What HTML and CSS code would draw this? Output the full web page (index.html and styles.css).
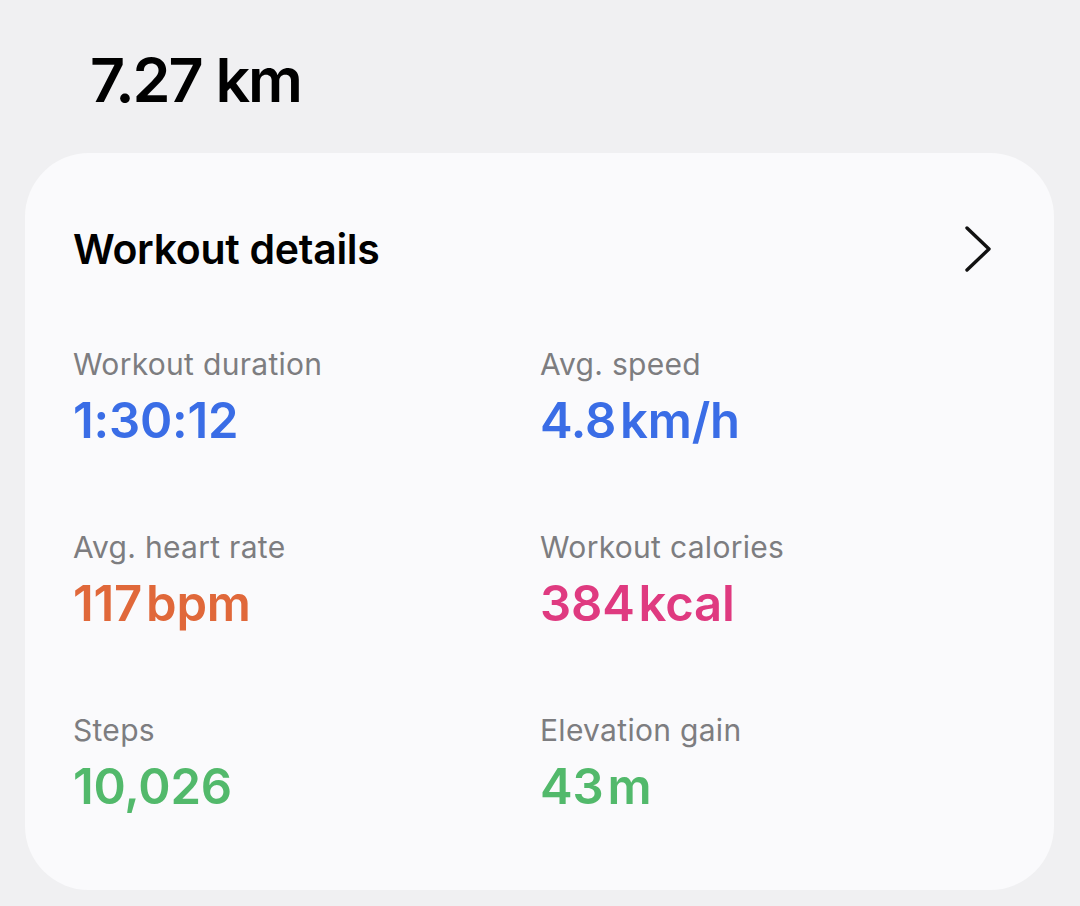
FILE: index.html
```html
<!DOCTYPE html>
<html lang="en">
<head>
<meta charset="utf-8">
<link rel="stylesheet" href="styles.css">
<title>Workout</title>
</head>
<body>
<div class="distance">7.27 km</div>
<section class="card">
  <div class="card-head">
    <h2 class="card-title">Workout details</h2>
    <svg class="chevron" width="28" height="48" viewBox="0 0 28 48" aria-hidden="true">
      <polyline points="3,3 25,24 3,45" fill="none" stroke="#111" stroke-width="3.4" stroke-linecap="round" stroke-linejoin="round"/>
    </svg>
  </div>
  <div class="stats">
    <div class="stat">
      <div class="label">Workout duration</div>
      <div class="value blue">1:30:12</div>
    </div>
    <div class="stat">
      <div class="label">Avg. speed</div>
      <div class="value blue">4.8<span class="unit">km/h</span></div>
    </div>
    <div class="stat">
      <div class="label">Avg. heart rate</div>
      <div class="value orange">117<span class="unit">bpm</span></div>
    </div>
    <div class="stat">
      <div class="label">Workout calories</div>
      <div class="value pink">384<span class="unit">kcal</span></div>
    </div>
    <div class="stat">
      <div class="label">Steps</div>
      <div class="value green">10,026</div>
    </div>
    <div class="stat">
      <div class="label">Elevation gain</div>
      <div class="value green">43<span class="unit">m</span></div>
    </div>
  </div>
</section>
</body>
</html>
```
FILE: styles.css
```css
* { box-sizing: border-box; }
html, body {
  margin: 0;
  padding: 0;
  background: #f0f0f2;
  font-family: Inter, "Noto Sans", "Liberation Sans", sans-serif;
  color: #000;
}
.distance {
  padding: 49px 0 0 90px;
  height: 153px;
  font-size: 61px;
  line-height: 62px;
  font-weight: 600;
  letter-spacing: -2.2px;
  word-spacing: 1px;
}
.card {
  margin: 0 26px 0 25px;
  height: 737px;
  background: #fafafc;
  border-radius: 64px;
  padding: 72px 62px 0 48px;
}
.card-head {
  display: flex;
  align-items: center;
  justify-content: space-between;
  height: 48px;
}
.card-title {
  margin: 0;
  font-size: 41px;
  line-height: 48px;
  font-weight: 600;
  letter-spacing: -0.3px;
}
.chevron { display: block; }
.stats {
  margin-top: 73px;
  display: grid;
  grid-template-columns: 467px 1fr;
  row-gap: 79px;
}
.label {
  font-size: 30px;
  line-height: 36px;
  color: #7d7d80;
  font-weight: 400;
  letter-spacing: 0.3px;
}
.value {
  margin-top: 10px;
  font-size: 49px;
  line-height: 58px;
  font-weight: 600;
  letter-spacing: -0.2px;
}
.unit { margin-left: 4px; }
.blue { color: #3a6de6; }
.orange { color: #e0683a; }
.pink { color: #df3a80; }
.green { color: #52b96b; }
```
